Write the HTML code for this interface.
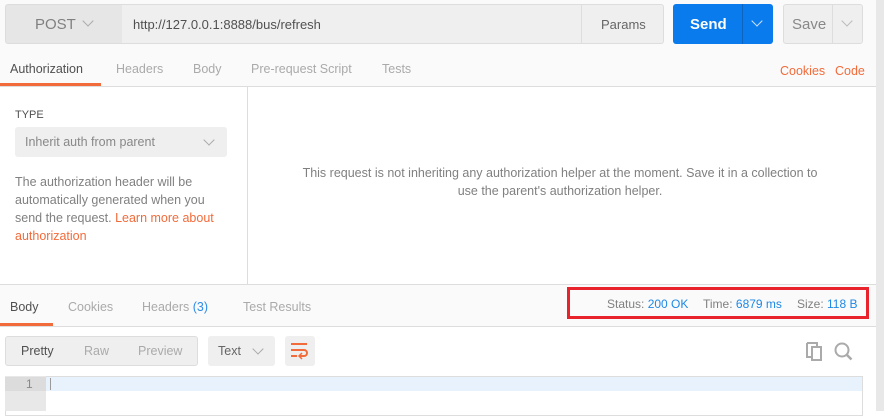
<!DOCTYPE html><html><head><style>
body{margin:0;width:884px;height:411px;overflow:hidden;background:#fff;font-family:"Liberation Sans",sans-serif;position:relative}
.a{position:absolute}
.top{left:0;top:0;width:876px;height:86px;background:#fafafa}
.box{background:#efefef;border:1px solid #ddd;box-sizing:border-box}
.chev{display:inline-block;width:7px;height:7px;border-right:1.5px solid currentColor;border-bottom:1.5px solid currentColor;transform:rotate(45deg)}
.t{font-size:12.5px;color:#aaa}
</style></head><body>
<div class="a top"></div>
<div class="a box" style="left:5px;top:4px;width:118px;height:40px;border-radius:3px 0 0 3px;background:#e6e6e6"></div>
<div class="a" style="left:35px;top:16px;font-size:15px;color:#808080">POST</div>
<div class="a chev" style="left:84px;top:17px;color:#aaa"></div>
<div class="a box" style="left:122px;top:4px;width:542px;height:40px;border-radius:0 3px 3px 0;border-left:none"></div>
<div class="a" style="left:133px;top:17px;font-size:13px;color:#505050">http://127.0.0.1:8888/bus/refresh</div>
<div class="a" style="left:581px;top:4px;width:1px;height:40px;background:#ddd"></div>
<div class="a" style="left:601px;top:17px;font-size:13px;color:#666">Params</div>
<div class="a" style="left:673px;top:4px;width:100px;height:40px;background:#097bed;border-radius:3px"></div>
<div class="a" style="left:742px;top:4px;width:1px;height:40px;background:#0a64c0"></div>
<div class="a" style="left:690px;top:16px;font-size:15px;font-weight:bold;color:#fff">Send</div>
<div class="a chev" style="left:753px;top:17px;color:#cfe3fb"></div>
<div class="a box" style="left:783px;top:4px;width:80px;height:40px;border-radius:3px"></div>
<div class="a" style="left:832px;top:4px;width:1px;height:40px;background:#ddd"></div>
<div class="a" style="left:792px;top:16px;font-size:15px;color:#888">Save</div>
<div class="a chev" style="left:843px;top:17px;color:#bbb"></div>
<div class="a" style="left:876px;top:0;width:8px;height:411px;background:#e8e8e8"></div>
<div class="a" style="left:10px;top:62px;font-size:12.5px;color:#505050">Authorization</div>
<div class="a t" style="left:116px;top:62px">Headers</div>
<div class="a t" style="left:193px;top:62px">Body</div>
<div class="a t" style="left:251px;top:62px">Pre-request Script</div>
<div class="a t" style="left:382px;top:62px">Tests</div>
<div class="a" style="left:780px;top:64px;font-size:12.5px;color:#f26b3a">Cookies</div>
<div class="a" style="left:835px;top:64px;font-size:12.5px;color:#f26b3a">Code</div>
<div class="a" style="left:0;top:83px;width:101px;height:3px;background:#f26b3a"></div>
<div class="a" style="left:0;top:86px;width:876px;height:1px;background:#ddd"></div>
<div class="a" style="left:247px;top:87px;width:1px;height:197px;background:#ddd"></div>
<div class="a" style="left:15px;top:109px;font-size:11px;color:#505050">TYPE</div>
<div class="a" style="left:15px;top:127px;width:212px;height:30px;background:#efefef;border-radius:3px"></div>
<div class="a" style="left:25px;top:135px;font-size:12.5px;color:#888">Inherit auth from parent</div>
<div class="a chev" style="left:205px;top:136px;color:#aaa"></div>
<div class="a" style="left:15px;top:173px;width:215px;font-size:12.5px;line-height:18px;color:#808080">The authorization header will be automatically generated when you send the request. <span style="color:#f26b3a">Learn more about authorization</span></div>
<div class="a" style="left:260px;top:164px;width:600px;text-align:center;font-size:12.5px;line-height:18px;color:#808080">This request is not inheriting any authorization helper at the moment. Save it in a collection to<br>use the parent's authorization helper.</div>
<div class="a" style="left:0;top:284px;width:876px;height:41px;background:#fafafa;border-top:1px solid #ddd;border-bottom:1px solid #ddd"></div>
<div class="a" style="left:10px;top:300px;font-size:12.5px;color:#505050">Body</div>
<div class="a t" style="left:68px;top:300px">Cookies</div>
<div class="a t" style="left:142px;top:300px">Headers <span style="color:#2d8ceb">(3)</span></div>
<div class="a t" style="left:243px;top:300px">Test Results</div>
<div class="a" style="left:0;top:323px;width:53px;height:3px;background:#f26b3a"></div>
<div class="a" style="left:567px;top:287px;width:302px;height:32px;border:3px solid #e8232b;box-sizing:border-box"></div>
<div class="a" style="left:607px;top:297px;font-size:12px;color:#808080">Status: <span style="color:#1e88e5">200 OK</span></div>
<div class="a" style="left:703px;top:297px;font-size:12px;color:#808080">Time: <span style="color:#1e88e5">6879 ms</span></div>
<div class="a" style="left:797px;top:297px;font-size:12px;color:#808080">Size: <span style="color:#1e88e5">118 B</span></div>
<div class="a box" style="left:5px;top:336px;width:193px;height:30px;border-radius:3px"></div>
<div class="a" style="left:21px;top:344px;font-size:12.5px;color:#505050">Pretty</div>
<div class="a t" style="left:84px;top:344px">Raw</div>
<div class="a t" style="left:138px;top:344px">Preview</div>
<div class="a" style="left:208px;top:336px;width:67px;height:30px;background:#efefef;border-radius:3px"></div>
<div class="a" style="left:218px;top:344px;font-size:12.5px;color:#666">Text</div>
<div class="a chev" style="left:254px;top:345px;color:#aaa"></div>
<div class="a" style="left:285px;top:336px;width:30px;height:30px;background:#efefef;border-radius:3px"></div>
<svg class="a" style="left:290px;top:341px" width="20" height="20"><path d="M1 3h16M1 9h13a3 3 0 0 1 0 6h-4M1 15h6" stroke="#f26b3a" stroke-width="2" fill="none"/><path d="M12 12l-3 3 3 3" stroke="#f26b3a" stroke-width="1.5" fill="none"/></svg>
<svg class="a" style="left:805px;top:341px" width="50" height="22"><path d="M2 2h10v4M2 2v14h4" stroke="#aaa" stroke-width="2" fill="none"/><rect x="7" y="6" width="9" height="13" stroke="#aaa" stroke-width="2" fill="none"/><circle cx="37" cy="9" r="6.5" stroke="#aaa" stroke-width="2" fill="none"/><path d="M41.5 13.5l5 5" stroke="#aaa" stroke-width="2.5"/></svg>
<div class="a" style="left:5px;top:376px;width:858px;height:40px;border:1px solid #ddd;box-sizing:border-box"></div>
<div class="a" style="left:5px;top:376px;width:41px;height:35px;background:#e8e8e8"></div>
<div class="a" style="left:5px;top:377px;width:41px;height:14px;background:#dcdcdc"></div>
<div class="a" style="left:46px;top:377px;width:816px;height:14px;background:#e8f2fc"></div>
<div class="a" style="left:26px;top:377px;font-size:12px;color:#888">1</div>
<div class="a" style="left:50px;top:378px;width:1px;height:12px;background:#999"></div>
</body></html>
